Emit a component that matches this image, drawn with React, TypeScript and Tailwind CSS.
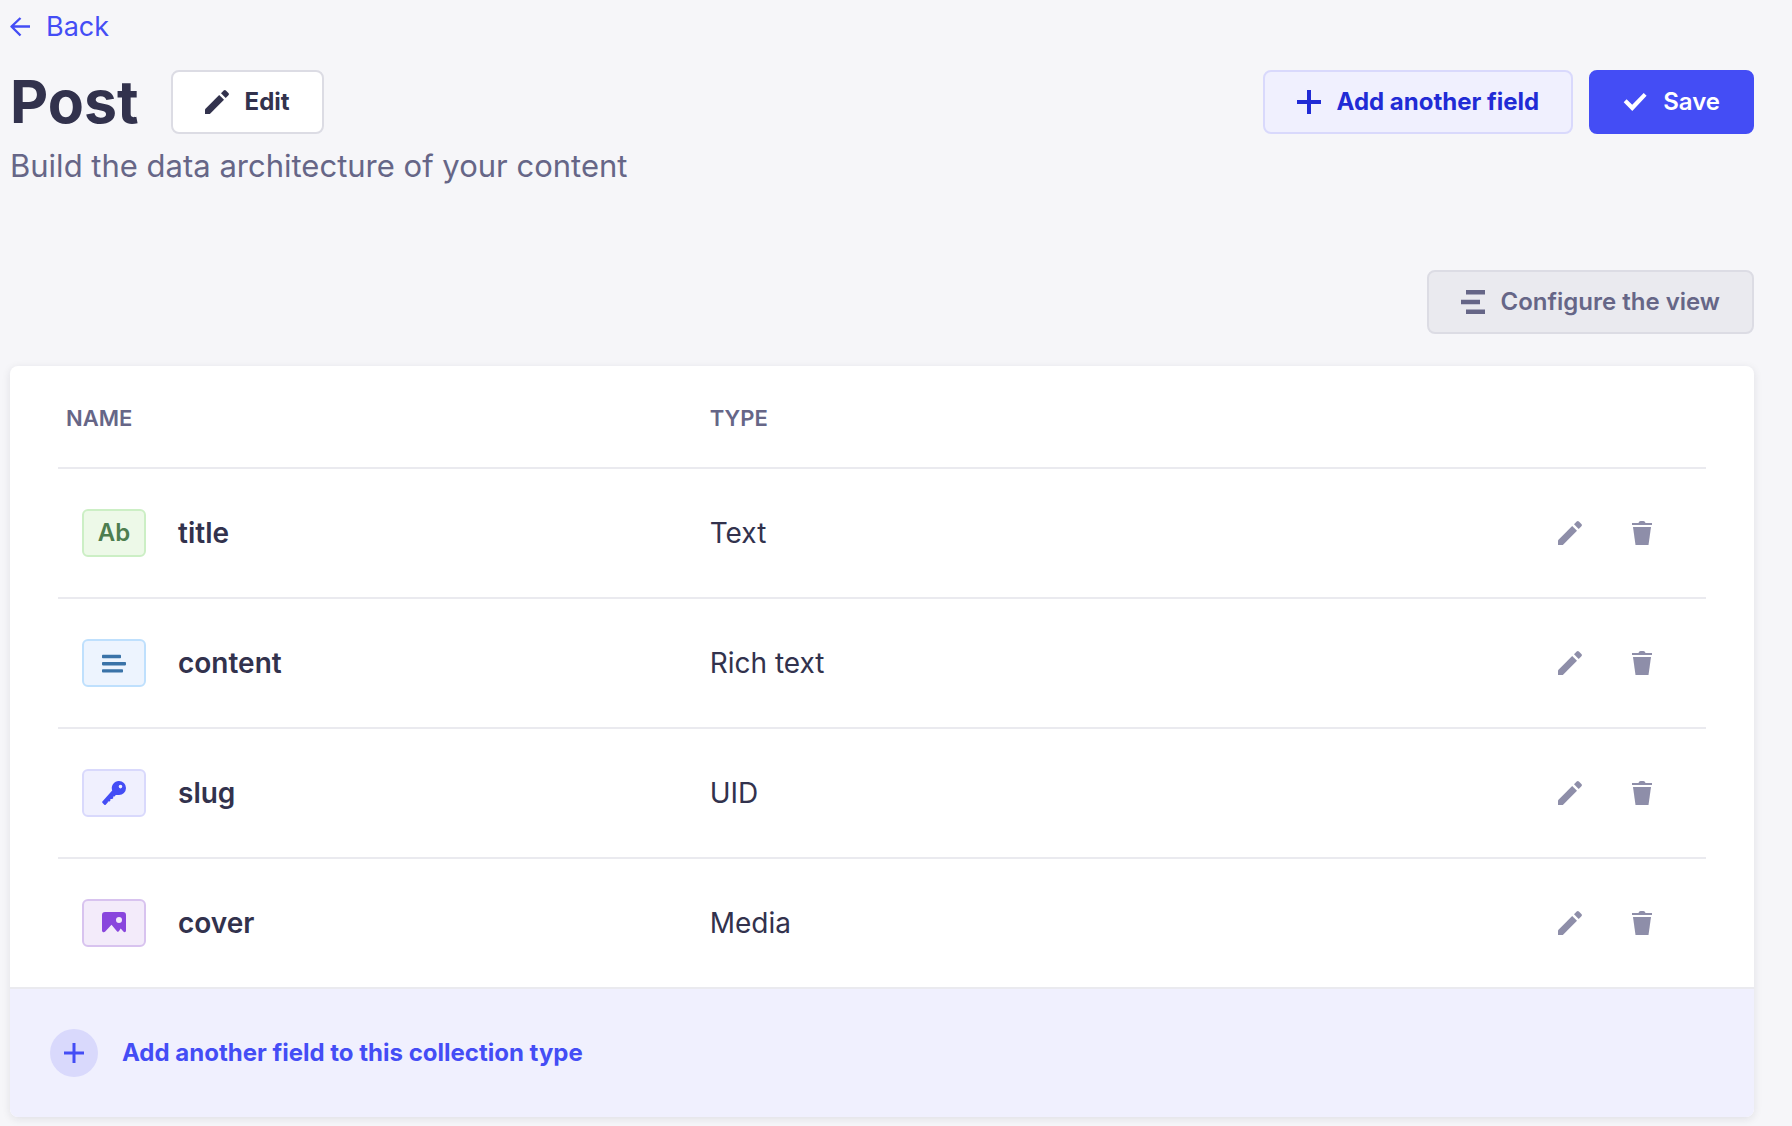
import type { ReactNode } from "react";

function Pencil({ className = "" }: { className?: string }) {
  return (
    <svg className={`size-6 shrink-0 ${className}`} viewBox="0 0 24 24" fill="currentColor" aria-hidden="true">
      <path d="M0 24v-4.800L14.200 5l4.800 4.800L4.800 24H0z" />
      <path d="M16 3.300l2.700-2.700a1.600 1.600 0 0 1 2.200 0l2.500 2.500a1.600 1.600 0 0 1 0 2.200L20.700 8 16 3.300z" />
    </svg>
  );
}

function Trash() {
  return (
    <svg className="size-6 shrink-0" viewBox="0 0 24 24" fill="currentColor" aria-hidden="true">
      <path d="M2 2h6.500c.4-1.200 1.100-2 2.200-2h2.600c1.100 0 1.800.8 2.200 2H22v2H2V2z" />
      <path d="M3 6h18l-2.500 18h-13L3 6z" />
    </svg>
  );
}

function Plus() {
  return (
    <svg className="size-6 shrink-0" viewBox="0 0 24 24" fill="currentColor" aria-hidden="true">
      <path d="M10 0h4v10h10v4H14v10h-4V14H0v-4h10V0z" />
    </svg>
  );
}

const LinesIcon = (
  <svg className="size-6" viewBox="0 0 24 24" fill="currentColor" aria-hidden="true">
    <rect x="0" y="3.800" width="19" height="3.400" rx="0.800" />
    <rect x="0" y="11" width="24" height="3.400" rx="0.800" />
    <rect x="0" y="18.200" width="21" height="3.400" rx="0.800" />
  </svg>
);

const KeyIcon = (
  <svg className="size-6" viewBox="0 0 24 24" fill="currentColor" aria-hidden="true">
    <path
      fillRule="evenodd"
      d="M17 0a7 7 0 0 1 0 14h-3.200l-1.300 1.500h-1.300v1.800l-1 .800H8.400v1.500l-.800.800H5.900v.8L3.700 23.700c-.4.400-1 .4-1.400 0L.4 21.800c-.4-.4-.4-1 0-1.400L10.200 9.400A7 7 0 0 1 17 0zm1.500 3.800a1.800 1.800 0 1 0 0 3.600 1.800 1.800 0 0 0 0-3.600z"
    />
  </svg>
);

const ImageIcon = (
  <svg className="size-6" viewBox="0 0 24 24" fill="currentColor" aria-hidden="true">
    <path
      fillRule="evenodd"
      d="M3 1h18a3 3 0 0 1 3 3v15.500c0 1.300-1.300 2.200-2.400 1.200L18.700 17.500l-1.800 2.800c-.5.600-1.300.6-1.800.1L9.500 13.800 3 20.700c-1.200 1-3 .3-3-1.300V4a3 3 0 0 1 3-3zm14 5a3 3 0 1 0 0 6 3 3 0 0 0 0-6z"
    />
  </svg>
);

type Field = { name: string; type: string; icon: ReactNode; badge: string };

const fields: Field[] = [
  {
    name: "title",
    type: "Text",
    icon: "Ab",
    badge: "border-[#ccefc5] bg-[#edf9e8] text-[#4d7e50]",
  },
  {
    name: "content",
    type: "Rich text",
    icon: LinesIcon,
    badge: "border-[#bfe0fd] bg-[#edf4fe] text-[#3a73a8]",
  },
  {
    name: "slug",
    type: "UID",
    icon: KeyIcon,
    badge: "border-[#d9d9fc] bg-[#f0f0fe] text-[#444df5]",
  },
  {
    name: "cover",
    type: "Media",
    icon: ImageIcon,
    badge: "border-[#d8c3ef] bg-[#f3ebfa] text-[#8946dd]",
  },
];

const button = "flex h-16 items-center gap-4 rounded-lg border-2 px-8 text-2xl";

export default function App() {
  return (
    <div className="min-h-screen bg-[#f6f6f9] pr-[38px] pb-[9px] pl-[10px] font-['Inter',sans-serif] text-[#32324d]">
      <header>
        <a href="#back" className="inline-flex h-[54px] items-center gap-4 align-top text-[27px] text-[#444df5]">
          <svg
            className="size-5"
            viewBox="0 0 20 20"
            fill="none"
            stroke="currentColor"
            strokeWidth="2.400"
            strokeLinejoin="round"
            aria-hidden="true"
          >
            <path d="M20 9.500H1.500M10.500 1L1.500 9.500l9 9" />
          </svg>
          Back
        </a>
        <div className="mt-4 flex items-center justify-between">
          <div className="flex items-center gap-8">
            <h1 className="text-[59px] leading-[64px] font-bold">Post</h1>
            <button type="button" className={`${button} border-[#dcdce4] bg-white font-bold`}>
              <Pencil />
              Edit
            </button>
          </div>
          <div className="flex gap-4">
            <button type="button" className={`${button} border-[#d9d9fc] bg-[#f0f0fe] font-bold text-[#212bd5]`}>
              <Plus />
              Add another field
            </button>
            <button type="button" className={`${button} border-[#444df5] bg-[#444df5] font-semibold text-white`}>
              <svg className="size-6" viewBox="0 0 24 24" fill="currentColor" aria-hidden="true">
                <path d="M.7 12.200l2.900-2.900 5.600 5.400L20.700 2.900l2.900 2.900L9.300 20.900.7 12.200z" />
              </svg>
              Save
            </button>
          </div>
        </div>
        <p className="mt-3 text-[31px] leading-10 text-[#666687]">Build the data architecture of your content</p>
      </header>

      <main className="mt-[84px]">
        <div className="flex justify-end">
          <button type="button" className={`${button} border-[#dcdce4] bg-[#eaeaef] font-semibold text-[#666687]`}>
            <svg className="size-6" viewBox="0 0 24 24" fill="currentColor" aria-hidden="true">
              <path d="M5 0h19v4.500H5zM0 9.800h19v4.500H0zM5 19.500h19V24H5z" />
            </svg>
            Configure the view
          </button>
        </div>

        <section className="mt-8 overflow-hidden rounded-lg bg-white shadow-[0_2px_8px_rgba(33,33,52,0.1)]">
          <div className="px-12">
            <table className="w-full table-fixed border-separate border-spacing-0">
              <thead>
                <tr className="h-[101px] text-left text-[22px] text-[#666687]">
                  <th scope="col" className="w-[39%] px-2 pt-1 font-semibold">NAME</th>
                  <th scope="col" className="px-[9px] pt-1 font-semibold">TYPE</th>
                  <th scope="col" className="w-[180px]" aria-label="Actions" />
                </tr>
              </thead>
              <tbody>
                {fields.map((field) => (
                  <tr key={field.name} className="h-[130px] text-[28px] [&>td]:border-t-2 [&>td]:border-[#eaeaef]">
                    <td className="px-6">
                      <div className="flex items-center gap-8">
                        <span
                          className={`flex h-12 w-16 items-center justify-center rounded-md border-2 text-2xl font-semibold ${field.badge}`}
                        >
                          {field.icon}
                        </span>
                        <span className="font-semibold">{field.name}</span>
                      </div>
                    </td>
                    <td className="px-[9px]">{field.type}</td>
                    <td>
                      <div className="flex justify-end gap-12 pr-[52px] text-[#8e8ea9]">
                        <button type="button" aria-label={`Edit ${field.name}`}>
                          <Pencil />
                        </button>
                        <button type="button" aria-label={`Delete ${field.name}`}>
                          <Trash />
                        </button>
                      </div>
                    </td>
                  </tr>
                ))}
              </tbody>
            </table>
          </div>
          <button
            type="button"
            className="flex h-[130px] w-full items-center gap-6 border-t-2 border-[#eaeaef] bg-[#f0f0fe] px-10 text-2xl font-bold text-[#444df5]"
          >
            <span className="flex size-12 items-center justify-center rounded-full bg-[#d9d9fc]">
              <svg className="size-5" viewBox="0 0 20 20" fill="currentColor" aria-hidden="true">
                <path d="M8.500 0h3v8.500H20v3h-8.500V20h-3v-8.500H0v-3h8.500V0z" />
              </svg>
            </span>
            Add another field to this collection type
          </button>
        </section>
      </main>
    </div>
  );
}
